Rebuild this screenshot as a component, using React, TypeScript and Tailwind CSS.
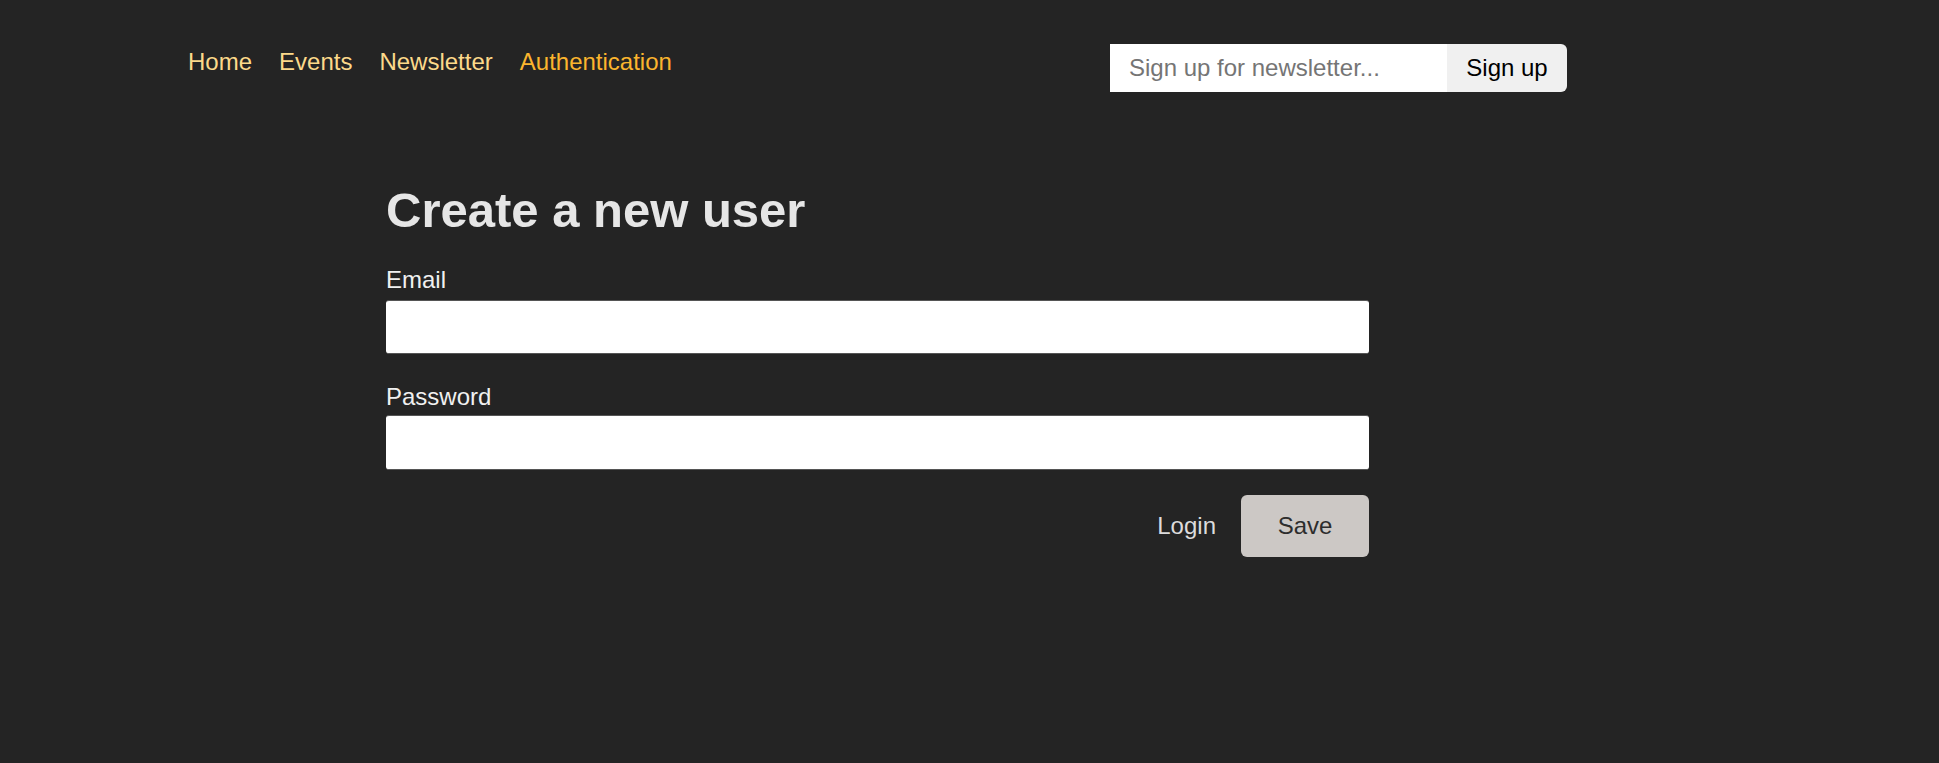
import React from 'react';

const links = [
    { label: 'Home', active: false },
    { label: 'Events', active: false },
    { label: 'Newsletter', active: false },
    { label: 'Authentication', active: true },
];

function Header() {
    return (
        <header className="flex items-start justify-between pt-[44px] pl-[188px] pr-[372px]">
            <nav className="flex gap-[27px] mt-[4px] text-[24px] leading-[27.6px]">
                {links.map(link => (
                    <a
                        key={link.label}
                        href="#"
                        className={link.active ? 'text-[#fbb52e]' : 'text-[#fcd98a]'}
                    >
                        {link.label}
                    </a>
                ))}
            </nav>

            <form className="flex h-[48px]" onSubmit={e => e.preventDefault()}>
                <input
                    type="email"
                    placeholder="Sign up for newsletter..."
                    className="w-[337px] bg-white px-[19px] text-[24px] text-black placeholder:text-[#757575] outline-none"
                />
                <button className="w-[120px] bg-[#f0f0f0] text-[24px] text-black rounded-r-[6px]">Sign up</button>
            </form>
        </header>
    );
}

function SignupForm() {
    return (
        <main className="pl-[386px] pt-[91px]">
            <form className="w-[983px]" onSubmit={e => e.preventDefault()}>
                <h1 className="text-[49px] leading-[55px] font-bold text-[#e6e6e6]">Create a new user</h1>

                <div className="mt-[28px]">
                    <label htmlFor="email" className="block text-[24px] leading-[27.6px] text-[#f0f0f0]">Email</label>
                    <input
                        id="email"
                        type="email"
                        className="mt-[6px] block w-full h-[54px] bg-white border-y border-[#555] rounded-[3px] outline-none"
                    />
                </div>

                <div className="mt-[29px]">
                    <label htmlFor="password" className="block text-[24px] leading-[27.6px] text-[#f0f0f0]">Password</label>
                    <input
                        id="password"
                        type="password"
                        className="mt-[5px] block w-full h-[55px] bg-white border-y border-[#555] rounded-[3px] outline-none"
                    />
                </div>

                <div className="mt-[25px] flex items-center justify-end gap-[25px]">
                    <button type="button" className="text-[24px] text-[#dcdcdc]">Login</button>
                    <button className="w-[128px] h-[62px] bg-[#ccc8c5] text-[24px] text-[#2d2d2d] rounded-[6px]">Save</button>
                </div>
            </form>
        </main>
    );
}

export default function App() {
    return (
        <div className="min-h-[763px] bg-[#242424] font-['Liberation_Sans',Arial,sans-serif]">
            <Header />
            <SignupForm />
        </div>
    );
}
